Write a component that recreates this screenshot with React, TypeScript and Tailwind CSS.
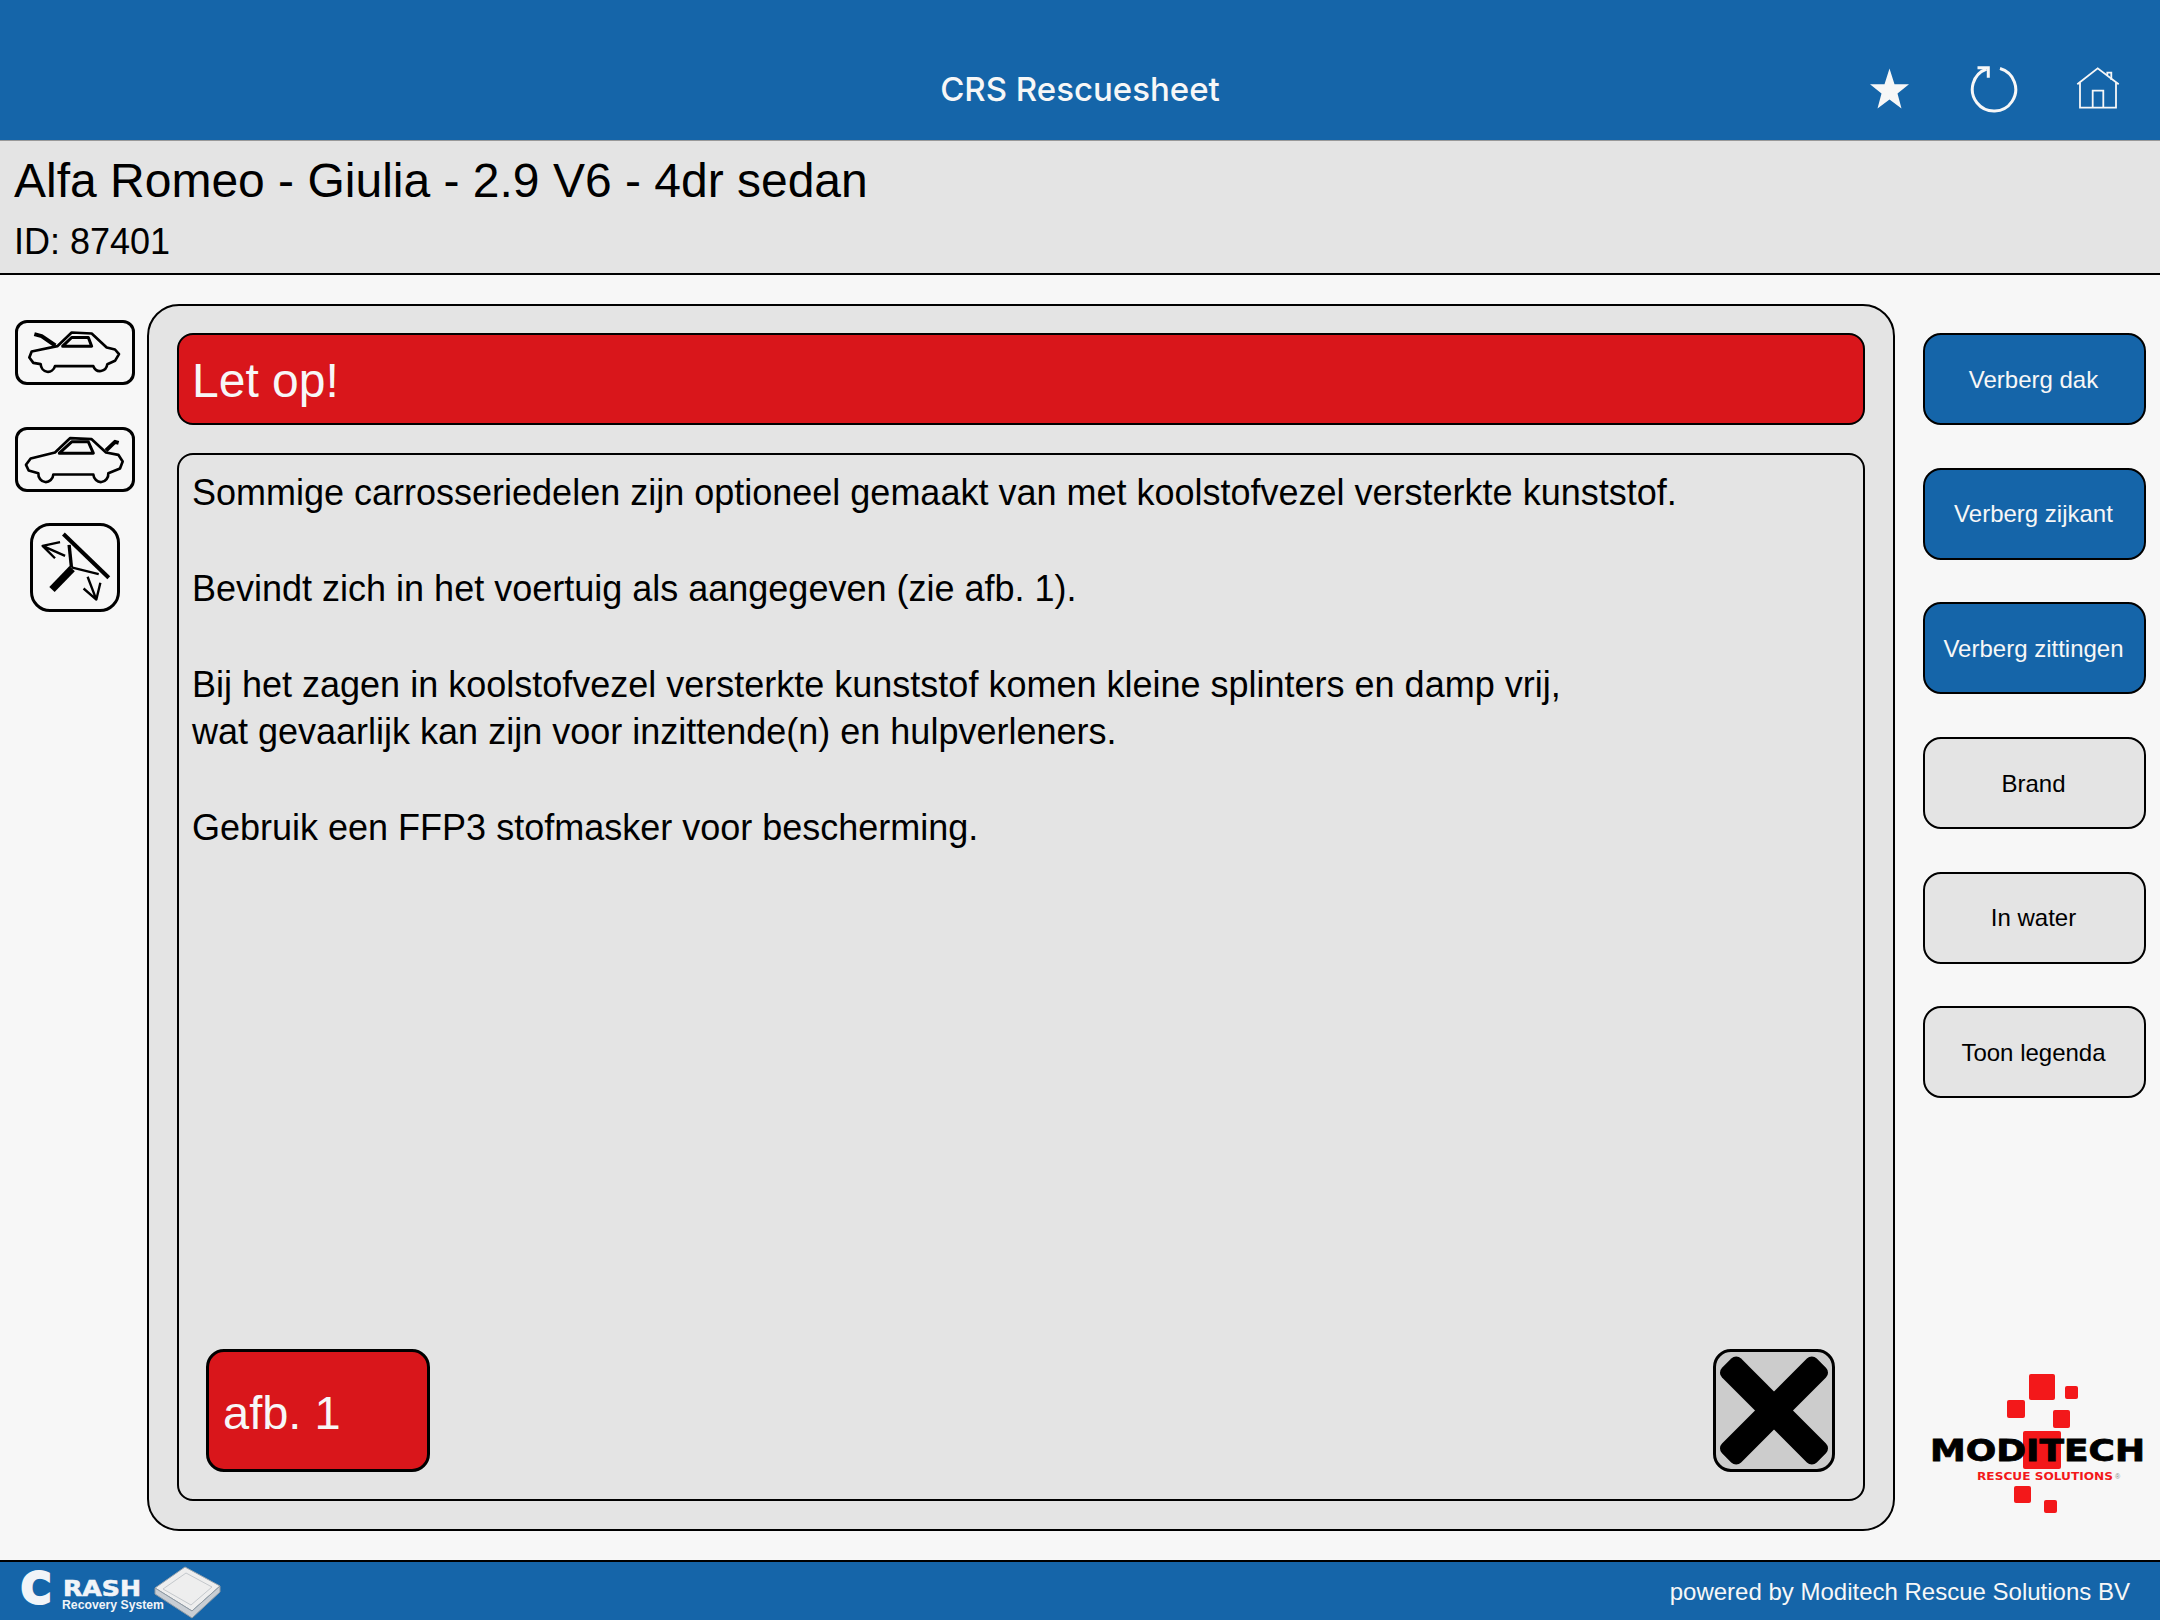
const BLUE = "#1565a9";

function StarIcon() {
  return (
    <svg viewBox="0 0 48 48" className="w-12 h-12">
      <polygon points="23.5,2.5 28.5,18.3 43,18.3 31.5,27.5 35.5,42.5 23.5,33.5 11.5,42.5 15.5,27.5 4,18.3 18.5,18.3" fill="#f7f7f7" />
    </svg>
  );
}

function RefreshIcon() {
  return (
    <svg viewBox="0 0 48 48" className="w-12 h-12" fill="none" stroke="#f7f7f7" strokeWidth="3">
      <path d="M30 2.5A21.7 21.7 0 1 1 16.5 3" />
      <path d="M7.5 1.7H18.3V11.7" />
    </svg>
  );
}

function HomeIcon() {
  return (
    <svg viewBox="0 0 48 48" className="w-12 h-12" fill="none" stroke="#f7f7f7" strokeWidth="1.8">
      <path d="M3.3 18.3L23.7 2.3L44.7 18.3" />
      <path d="M6 16.5V41.7H42V16.5" />
      <path d="M18.7 41.7V24.7H29.3V41.7" />
      <path d="M33.3 9V6.7H37.3V14" />
    </svg>
  );
}

function HoodIcon() {
  return (
    <svg viewBox="54 67 342 176" className="w-full h-full" fill="none" stroke="black" strokeWidth="8" strokeLinejoin="round">
      <path d="M172 136L95 152L88 170L100 186L122 190A22 24 0 0 0 165 196H280A22 24 0 0 0 322 190L345 180L357 160L345 146L320 140L275 98L215 95Z" />
      <path d="M188 136L215 110H265L275 136Z" strokeWidth="9" />
      <path d="M103 100L125 106L166 134" strokeWidth="12" />
    </svg>
  );
}

function TrunkIcon() {
  return (
    <svg viewBox="54 391 342 176" className="w-full h-full" fill="none" stroke="black" strokeWidth="8" strokeLinejoin="round">
      <path d="M165 458L92 476L78 495L86 512L115 520A22 24 0 0 0 160 524H280A22 24 0 0 0 325 520L360 506L368 485L355 465L318 458L275 418L210 415Z" />
      <path d="M178 460L215 426H265L280 460Z" strokeWidth="9" />
      <path d="M318 452L345 426L356 429" strokeWidth="12" />
    </svg>
  );
}

function WiperIcon() {
  return (
    <svg viewBox="101 679 247 247" className="w-full h-full" fill="none" stroke="black" strokeLinejoin="round">
      <path d="M190 703L325 833" strokeWidth="12" />
      <path d="M207 735L214 802" strokeWidth="10" />
      <path d="M214 802L295 822" strokeWidth="7" />
      <path d="M156 868L216 806" strokeWidth="22" />
      <path d="M195 768L128 738M180 727L128 738L165 775" strokeWidth="7" />
      <path d="M262 830L288 898M250 865L288 898L300 848" strokeWidth="7" />
    </svg>
  );
}

function ModitechLogo() {
  return (
    <svg viewBox="1925 1370 225 150" className="w-[225px] h-[150px]">
      <g fill="#f3181a">
        <rect x="2029" y="1374" width="26" height="26" rx="2" />
        <rect x="2065" y="1386" width="13" height="13" rx="2" />
        <rect x="2007" y="1400" width="18" height="18" rx="2" />
        <rect x="2053" y="1410" width="17" height="18" rx="2" />
        <rect x="2023" y="1431" width="38" height="38" rx="2" />
        <rect x="2014" y="1486" width="17" height="17" rx="2" />
        <rect x="2044" y="1500" width="13" height="13" rx="2" />
      </g>
      <text x="1930" y="1461" textLength="215" lengthAdjust="spacingAndGlyphs" fontFamily="'DejaVu Sans'" fontWeight="700" fontSize="30" stroke="black" strokeWidth="0.8">
        MODITECH
      </text>
      <text x="1977" y="1480" textLength="136" lengthAdjust="spacingAndGlyphs" fontFamily="'DejaVu Sans'" fontWeight="700" fontSize="10" fill="#f3181a">
        RESCUE SOLUTIONS
      </text>
      <text x="2115" y="1479" fontFamily="'Liberation Sans'" fontSize="7" fill="#888888">
        ®
      </text>
    </svg>
  );
}

function CrashLogo() {
  return (
    <svg viewBox="0 0 240 60" className="w-[240px] h-[60px]">
      <text x="21" y="42" textLength="30" lengthAdjust="spacingAndGlyphs" fontFamily="'DejaVu Sans'" fontWeight="700" fontSize="43" fill="#f1f4f8" stroke="#f1f4f8" strokeWidth="3">
        C
      </text>
      <text x="63" y="35" textLength="78" lengthAdjust="spacingAndGlyphs" fontFamily="'DejaVu Sans'" fontWeight="700" fontSize="21" fill="#f1f4f8" stroke="#f1f4f8" strokeWidth="0.6">
        RASH
      </text>
      <text x="62" y="48" textLength="102" lengthAdjust="spacingAndGlyphs" fontFamily="'Liberation Sans'" fontWeight="700" fontSize="13" fill="#f1f4f8">
        Recovery System
      </text>
      <path d="M155 27L185 6L220 25L192 50Z" fill="#eeeeee" stroke="#9aa5ae" strokeWidth="1" />
      <path d="M155 27V33L192 57L220 31V25L192 50Z" fill="#c9ced4" stroke="#8f9aa3" strokeWidth="1" />
      <path d="M163 28L186 12L212 26L191 44Z" fill="none" stroke="#c4c8cc" strokeWidth="1" />
    </svg>
  );
}

function SideButton({ label, active }: { label: string; active?: boolean }) {
  return (
    <button
      className={`w-[223px] h-[92px] pr-[2px] pt-[1px] rounded-[18px] border-2 border-black text-[24px] ${
        active ? "bg-[#1565a9] text-[#f7f7f7]" : "bg-[#e4e4e4] text-black"
      }`}
    >
      {label}
    </button>
  );
}

export default function App() {
  return (
    <div className="w-[2160px] h-[1620px] flex flex-col bg-[#f7f7f7] font-['Liberation_Sans',sans-serif] text-black overflow-hidden">
      {/* Top bar */}
      <header className="h-[140px] shrink-0 pt-10 grid grid-cols-[1fr_auto_1fr] items-center" style={{ background: BLUE }}>
        <div />
        <div className="text-[33px] font-medium text-[#f7f7f7] font-['Inter',sans-serif]">CRS Rescuesheet</div>
        <div className="flex justify-end gap-14 pr-[38px]">
          <StarIcon />
          <RefreshIcon />
          <HomeIcon />
        </div>
      </header>

      {/* Vehicle title */}
      <div className="h-[135px] shrink-0 bg-[#e4e4e4] border-t border-t-[#999999] border-b-2 border-b-black pl-[14px] pt-[12px]">
        <div className="text-[48px] leading-[56px]">Alfa Romeo - Giulia - 2.9 V6 - 4dr sedan</div>
        <div className="text-[36px] leading-[42px] mt-[12px]">ID: 87401</div>
      </div>

      {/* Body */}
      <div className="flex-1 flex min-h-0">
        <div className="w-[147px] shrink-0 flex flex-col items-center pl-[2px] pt-[45px]">
          <button className="w-[120px] h-[65px] rounded-[12px] border-[3px] border-black overflow-hidden">
            <HoodIcon />
          </button>
          <button className="w-[120px] h-[65px] mt-[42px] rounded-[12px] border-[3px] border-black overflow-hidden">
            <TrunkIcon />
          </button>
          <button className="w-[90px] h-[89px] mt-[31px] rounded-[20px] border-[3px] border-black overflow-hidden">
            <WiperIcon />
          </button>
        </div>

        <main className="mt-[29px] mb-[29px] w-[1748px] shrink-0 rounded-[32px] border-2 border-black bg-[#e4e4e4] pt-[27px] px-[28px] pb-[28px] flex flex-col">
          <div className="h-[92px] shrink-0 rounded-[16px] border-2 border-black bg-[#d9161b] flex items-center pl-[13px] pt-[4px] text-[48px] text-[#f7f7f7]">
            Let op!
          </div>
          <div className="flex-1 mt-[28px] rounded-[16px] border-2 border-black px-[13px] pt-[14px] pb-[27px] flex flex-col justify-between">
            <div className="text-[36px] leading-[47.8px]">
              <p>Sommige carrosseriedelen zijn optioneel gemaakt van met koolstofvezel versterkte kunststof.</p>
              <p className="mt-[48px]">Bevindt zich in het voertuig als aangegeven (zie afb. 1).</p>
              <p className="mt-[48px]">
                Bij het zagen in koolstofvezel versterkte kunststof komen kleine splinters en damp vrij,
                <br />
                wat gevaarlijk kan zijn voor inzittende(n) en hulpverleners.
              </p>
              <p className="mt-[48px]">Gebruik een FFP3 stofmasker voor bescherming.</p>
            </div>
            <div className="flex justify-between pl-[14px] pr-[15px]">
              <button className="w-[224px] h-[123px] rounded-[18px] border-[3px] border-black bg-[#d9161b] text-left pl-[14px] pt-[5px] text-[47px] text-[#f7f7f7]">
                afb. 1
              </button>
              <button className="w-[122px] h-[123px] rounded-[18px] border-[3px] border-black bg-[#cccccc] overflow-hidden">
                <svg viewBox="3 3 116 117" className="w-full h-full">
                  <rect x="-6" y="48" width="134" height="27" rx="7" transform="rotate(45 61 61.5)" />
                  <rect x="-6" y="48" width="134" height="27" rx="7" transform="rotate(-45 61 61.5)" />
                </svg>
              </button>
            </div>
          </div>
        </main>

        <aside className="flex-1 flex flex-col items-center pl-[14px] pt-[58px] pb-[40px]">
          <div className="flex flex-col gap-[42.7px]">
            <SideButton label="Verberg dak" active />
            <SideButton label="Verberg zijkant" active />
            <SideButton label="Verberg zittingen" active />
            <SideButton label="Brand" />
            <SideButton label="In water" />
            <SideButton label="Toon legenda" />
          </div>
          <div className="mt-auto self-start ml-[16px]">
            <ModitechLogo />
          </div>
        </aside>
      </div>

      {/* Footer */}
      <footer className="h-[60px] shrink-0 border-t-2 border-black flex items-center justify-between pr-[30px] text-[24px] text-[#f7f7f7]" style={{ background: BLUE }}>
        <CrashLogo />
        <span className="pt-[2px]">powered by Moditech Rescue Solutions BV</span>
      </footer>
    </div>
  );
}
